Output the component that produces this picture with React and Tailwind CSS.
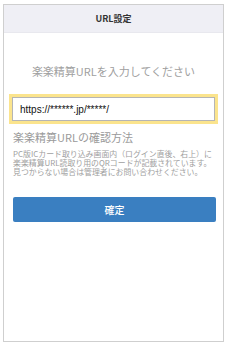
export default function App() {
  const jp = { fontFamily: '"Noto Sans CJK JP", "Noto Sans", sans-serif' };
  return (
    <div className="w-[227px] h-[348px] bg-white pt-[4px] pl-[3px]" style={jp}>
      <div className="w-[221px] h-[338px] border border-[#cfcfcf] flex flex-col bg-white">
        <div className="h-[28px] bg-[#efeff5] border-b border-[#e8e8ee] flex items-center justify-center text-[9px] font-bold text-[#333]">
          URL設定
        </div>
        <div className="mt-[31px] h-[15px] leading-[15px] text-center text-[11px] text-[#a0a0a0]">
          楽楽精算URLを入力してください
        </div>
        <div className="mt-[15px] mx-[5px] h-[30px] bg-[#fbe48d] p-[3px]">
          <div className="h-full bg-white border border-[#b5b5b5] flex items-center pl-[7px] text-[10px] text-[#111]" style={{ fontFamily: '"Liberation Sans", Arial, sans-serif' }}>
            https://******.jp/*****/
          </div>
        </div>
        <div className="mt-[6px] ml-[9px] h-[15px] leading-[15px] text-[11px] text-[#9a9a9a]">
          楽楽精算URLの確認方法
        </div>
        <div className="mt-[4px] ml-[9px] text-[7.9px] leading-[9.2px] text-[#a0a0a0] whitespace-nowrap">
          PC版ICカード取り込み画面内（ログイン直後、右上）に<br />
          楽楽精算URL読取り用のQRコードが記載されています。<br />
          見つからない場合は管理者にお問い合わせください。
        </div>
        <div className="mt-[20px] ml-[9px] w-[203px] h-[25px] rounded-[2px] bg-[#3a7fc1] flex items-center justify-center text-white text-[10px] font-medium">
          確定
        </div>
      </div>
    </div>
  );
}
